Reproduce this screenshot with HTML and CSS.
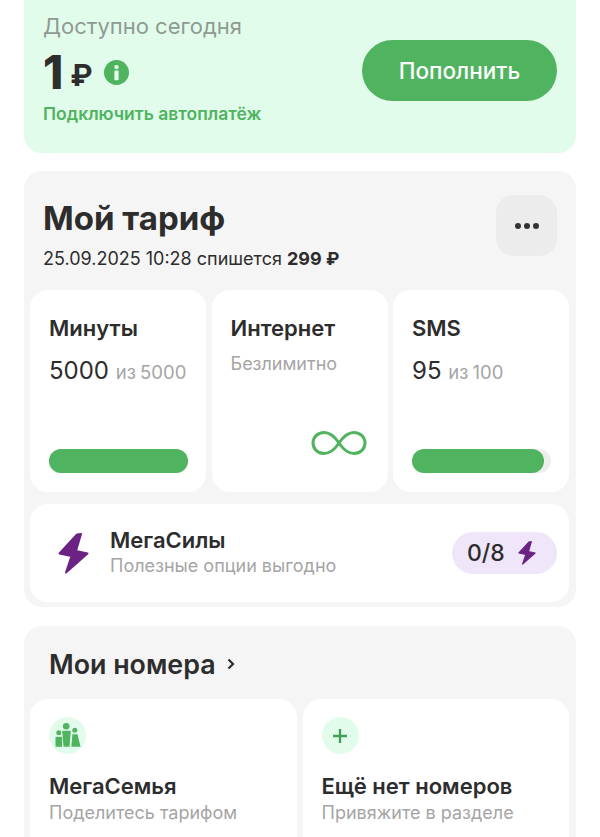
FILE: index.html
```html
<!DOCTYPE html>
<html lang="ru">
<head>
    <meta charset="UTF-8">
    <meta name="viewport" content="width=device-width, initial-scale=1.0">
    <title>Мой тариф</title>
    <link rel="stylesheet" href="styles.css">
</head>
<body>
    <div class="page">
        <section class="balance">
            <div class="balance-info">
                <div class="balance-label">Доступно сегодня</div>
                <div class="balance-sum">
                    <span class="sum-value">1</span>
                    <span class="sum-currency">₽</span>
                    <svg class="info-icon" viewBox="0 0 26 26" width="25" height="25">
                        <circle cx="13" cy="13" r="13" fill="#4fb35f"/>
                        <circle cx="13" cy="7.4" r="2.300" fill="#e2fceb"/>
                        <rect x="10.800" y="11" width="4.400" height="10" rx="1" fill="#e2fceb"/>
                    </svg>
                </div>
                <div class="autopay">Подключить автоплатёж</div>
            </div>
            <button class="topup">Пополнить</button>
        </section>

        <section class="panel tariff">
            <div class="tariff-head">
                <div>
                    <h1>Мой тариф</h1>
                    <p class="charge">25.09.2025 10:28 спишется <b>299 ₽</b></p>
                </div>
                <button class="more"><i></i><i></i><i></i></button>
            </div>

            <div class="counters">
                <div class="counter">
                    <h3>Минуты</h3>
                    <div class="amount">5000 <small>из 5000</small></div>
                    <div class="bar"><div class="bar-fill" style="width: 100%"></div></div>
                </div>
                <div class="counter">
                    <h3>Интернет</h3>
                    <div class="unlimited">Безлимитно</div>
                    <svg class="infinity" viewBox="0 0 56 26" width="56" height="26">
                        <path d="M28 13C24 7 20 2.500 13 2.500 6.500 2.500 2 7.300 2 13s4.500 10.500 11 10.500c7 0 11-4.500 15-10.500s8-10.500 15-10.500c6.500 0 11 4.800 11 10.500s-4.500 10.500-11 10.500c-7 0-11-4.500-15-10.500z" fill="none" stroke="#4fb35f" stroke-width="3"/>
                    </svg>
                </div>
                <div class="counter">
                    <h3>SMS</h3>
                    <div class="amount">95 <small>из 100</small></div>
                    <div class="bar"><div class="bar-fill" style="width: 95%"></div></div>
                </div>
            </div>

            <div class="powers">
                <svg class="bolt" viewBox="0 0 31 41" width="31" height="41">
                    <path d="M19 1.500 23 1l-5 17 11.500 2.500L8 39.500 13.500 23l-12-2.500z" fill="#6a2283" stroke="#6a2283" stroke-width="2" stroke-linejoin="round"/>
                </svg>
                <div class="powers-text">
                    <div class="powers-title">МегаСилы</div>
                    <div class="powers-sub">Полезные опции выгодно</div>
                </div>
                <div class="powers-badge">
                    0/8
                    <svg viewBox="0 0 31 41" width="18" height="24">
                        <path d="M19 1.500 23 1l-5 17 11.500 2.500L8 39.500 13.500 23l-12-2.500z" fill="#6a2283" stroke="#6a2283" stroke-width="2" stroke-linejoin="round"/>
                    </svg>
                </div>
            </div>
        </section>

        <section class="panel numbers">
            <h2>Мои номера
                <svg viewBox="0 0 10 14" width="10" height="14">
                    <path d="M2.500 2.500 7 7l-4.500 4.500" fill="none" stroke="#2d2d2d" stroke-width="2.200"/>
                </svg>
            </h2>
            <div class="number-cards">
                <div class="number-card">
                    <div class="round-icon">
                        <svg viewBox="0 0 37 37" width="37" height="37">
                            <g fill="#4fb35f">
                                <circle cx="17.200" cy="9.200" r="3.300"/>
                                <path d="M13.200 13.800h8.600l-1.300 16h-6z"/>
                                <circle cx="9.800" cy="15.800" r="2.500"/>
                                <rect x="6.500" y="19.800" width="6.600" height="10"/>
                                <circle cx="25.800" cy="13.200" r="2.500"/>
                                <path d="M23.400 17.200h5.100l3 12.600h-9.200z"/>
                            </g>
                        </svg>
                    </div>
                    <div class="number-title">МегаСемья</div>
                    <div class="number-sub">Поделитесь тарифом</div>
                </div>
                <div class="number-card">
                    <div class="round-icon">
                        <svg viewBox="0 0 16 16" width="16" height="16">
                            <path d="M8 1v14M1 8h14" stroke="#479f57" stroke-width="2.400" fill="none"/>
                        </svg>
                    </div>
                    <div class="number-title">Ещё нет номеров</div>
                    <div class="number-sub">Привяжите в разделе</div>
                </div>
            </div>
        </section>
    </div>
</body>
</html>
```

FILE: styles.css
```css
html, body {
    margin: 0;
    height: 100%;
    overflow: hidden;
    background: #fff;
}
body {
    font-family: Inter, "Noto Sans", sans-serif;
    color: #2d2d2d;
}
.page {
    height: 837px;
    overflow: hidden;
    padding: 0 24px;
    box-sizing: border-box;
}

/* баланс */
.balance {
    height: 153px;
    box-sizing: border-box;
    padding: 14px 19px 0;
    background: #e2fceb;
    border-radius: 0 0 18px 18px;
    display: flex;
    justify-content: space-between;
    align-items: flex-start;
}
.balance-label {
    font-size: 22px;
    line-height: 25px;
    color: #8f9a94;
}
.balance-sum {
    display: flex;
    align-items: center;
    height: 46px;
    margin-top: 10px;
}
.sum-value {
    font-size: 46px;
    font-weight: 800;
    line-height: 46px;
}
.sum-currency {
    font-size: 30px;
    font-weight: 700;
    line-height: 30px;
    margin: 6px 11px 0 7px;
}
.autopay {
    margin-top: 8px;
    font-size: 17.5px;
    line-height: 22px;
    font-weight: 600;
    color: #4fb35f;
}
.topup {
    width: 195px;
    height: 61px;
    margin-top: 26px;
    border: none;
    border-radius: 31px;
    background: #4fb35f;
    color: #fff;
    font-family: inherit;
    font-size: 22.5px;
    font-weight: 500;
}

/* серые блоки */
.panel {
    background: #f5f5f5;
    border-radius: 18px;
    padding: 0 7px 0 6px;
}
.tariff {
    margin-top: 18px;
    height: 436px;
    box-sizing: border-box;
}
.tariff-head {
    display: flex;
    justify-content: space-between;
    padding: 24px 12px 0 13px;
    height: 119px;
    box-sizing: border-box;
}
h1 {
    margin: 4px 0 0;
    font-size: 33px;
    line-height: 38px;
    font-weight: 700;
}
.charge {
    margin: 10px 0 0;
    font-size: 18px;
    line-height: 24px;
}
.more {
    width: 61px;
    height: 61px;
    border: none;
    border-radius: 18px;
    background: #ececec;
    display: flex;
    align-items: center;
    justify-content: center;
    gap: 3px;
    padding: 0;
}
.more i {
    width: 6px;
    height: 6px;
    border-radius: 50%;
    background: #333;
}

.counters {
    display: grid;
    grid-template-columns: repeat(3, 1fr);
    gap: 5.5px;
}
.counter {
    height: 202px;
    box-sizing: border-box;
    background: #fff;
    border-radius: 18px;
    padding: 25px 18px 19px 19px;
    display: flex;
    flex-direction: column;
}
.counter h3 {
    margin: 0;
    font-size: 22px;
    line-height: 26px;
    font-weight: 600;
}
.amount {
    margin-top: 15px;
    font-size: 24px;
    line-height: 30px;
    white-space: nowrap;
}
.amount small {
    font-size: 18.5px;
    word-spacing: -1px;
    color: #a5a5a5;
}
.unlimited {
    margin-top: 11px;
    font-size: 18px;
    line-height: 24px;
    color: #a5a5a5;
}
.bar {
    margin-top: auto;
    height: 24px;
    border-radius: 12px;
    background: #eeeeee;
}
.bar-fill {
    height: 100%;
    border-radius: 12px;
    background: #4fb35f;
}
.infinity {
    margin-top: auto;
    align-self: flex-end;
    margin-right: 3px;
    margin-bottom: 17px;
}

.powers {
    margin-top: 12px;
    height: 98px;
    box-sizing: border-box;
    background: #fff;
    border-radius: 18px;
    padding: 0 12px 0 28px;
    display: flex;
    align-items: center;
}
.powers-text {
    margin-left: 21px;
    flex: 1;
}
.powers-title {
    font-size: 22px;
    line-height: 24px;
    margin-bottom: 2px;
    font-weight: 600;
}
.powers-sub {
    font-size: 18px;
    line-height: 24px;
    color: #a5a5a5;
}
.powers-badge {
    width: 105px;
    height: 42px;
    box-sizing: border-box;
    padding-left: 15px;
    border-radius: 21px;
    background: #efe6fa;
    display: flex;
    align-items: center;
    gap: 13px;
    font-size: 23px;
    font-weight: 500;
}

.numbers {
    margin-top: 19px;
    height: 300px;
}
.numbers h2 {
    margin: 0;
    height: 73px;
    padding: 2px 19px 0;
    box-sizing: border-box;
    display: flex;
    align-items: center;
    gap: 10px;
    font-size: 26.8px;
    font-weight: 600;
}
.number-cards {
    display: grid;
    grid-template-columns: 1fr 1fr;
    gap: 6px;
}
.number-card {
    height: 200px;
    box-sizing: border-box;
    background: #fff;
    border-radius: 18px;
    padding: 18px 19px;
}
.round-icon {
    width: 37px;
    height: 37px;
    border-radius: 50%;
    background: #e2fceb;
    display: flex;
    align-items: center;
    justify-content: center;
}
.number-title {
    margin-top: 19px;
    font-size: 22px;
    line-height: 26px;
    font-weight: 600;
}
.number-sub {
    margin-top: 2px;
    font-size: 18px;
    line-height: 24px;
    color: #a5a5a5;
}
```
